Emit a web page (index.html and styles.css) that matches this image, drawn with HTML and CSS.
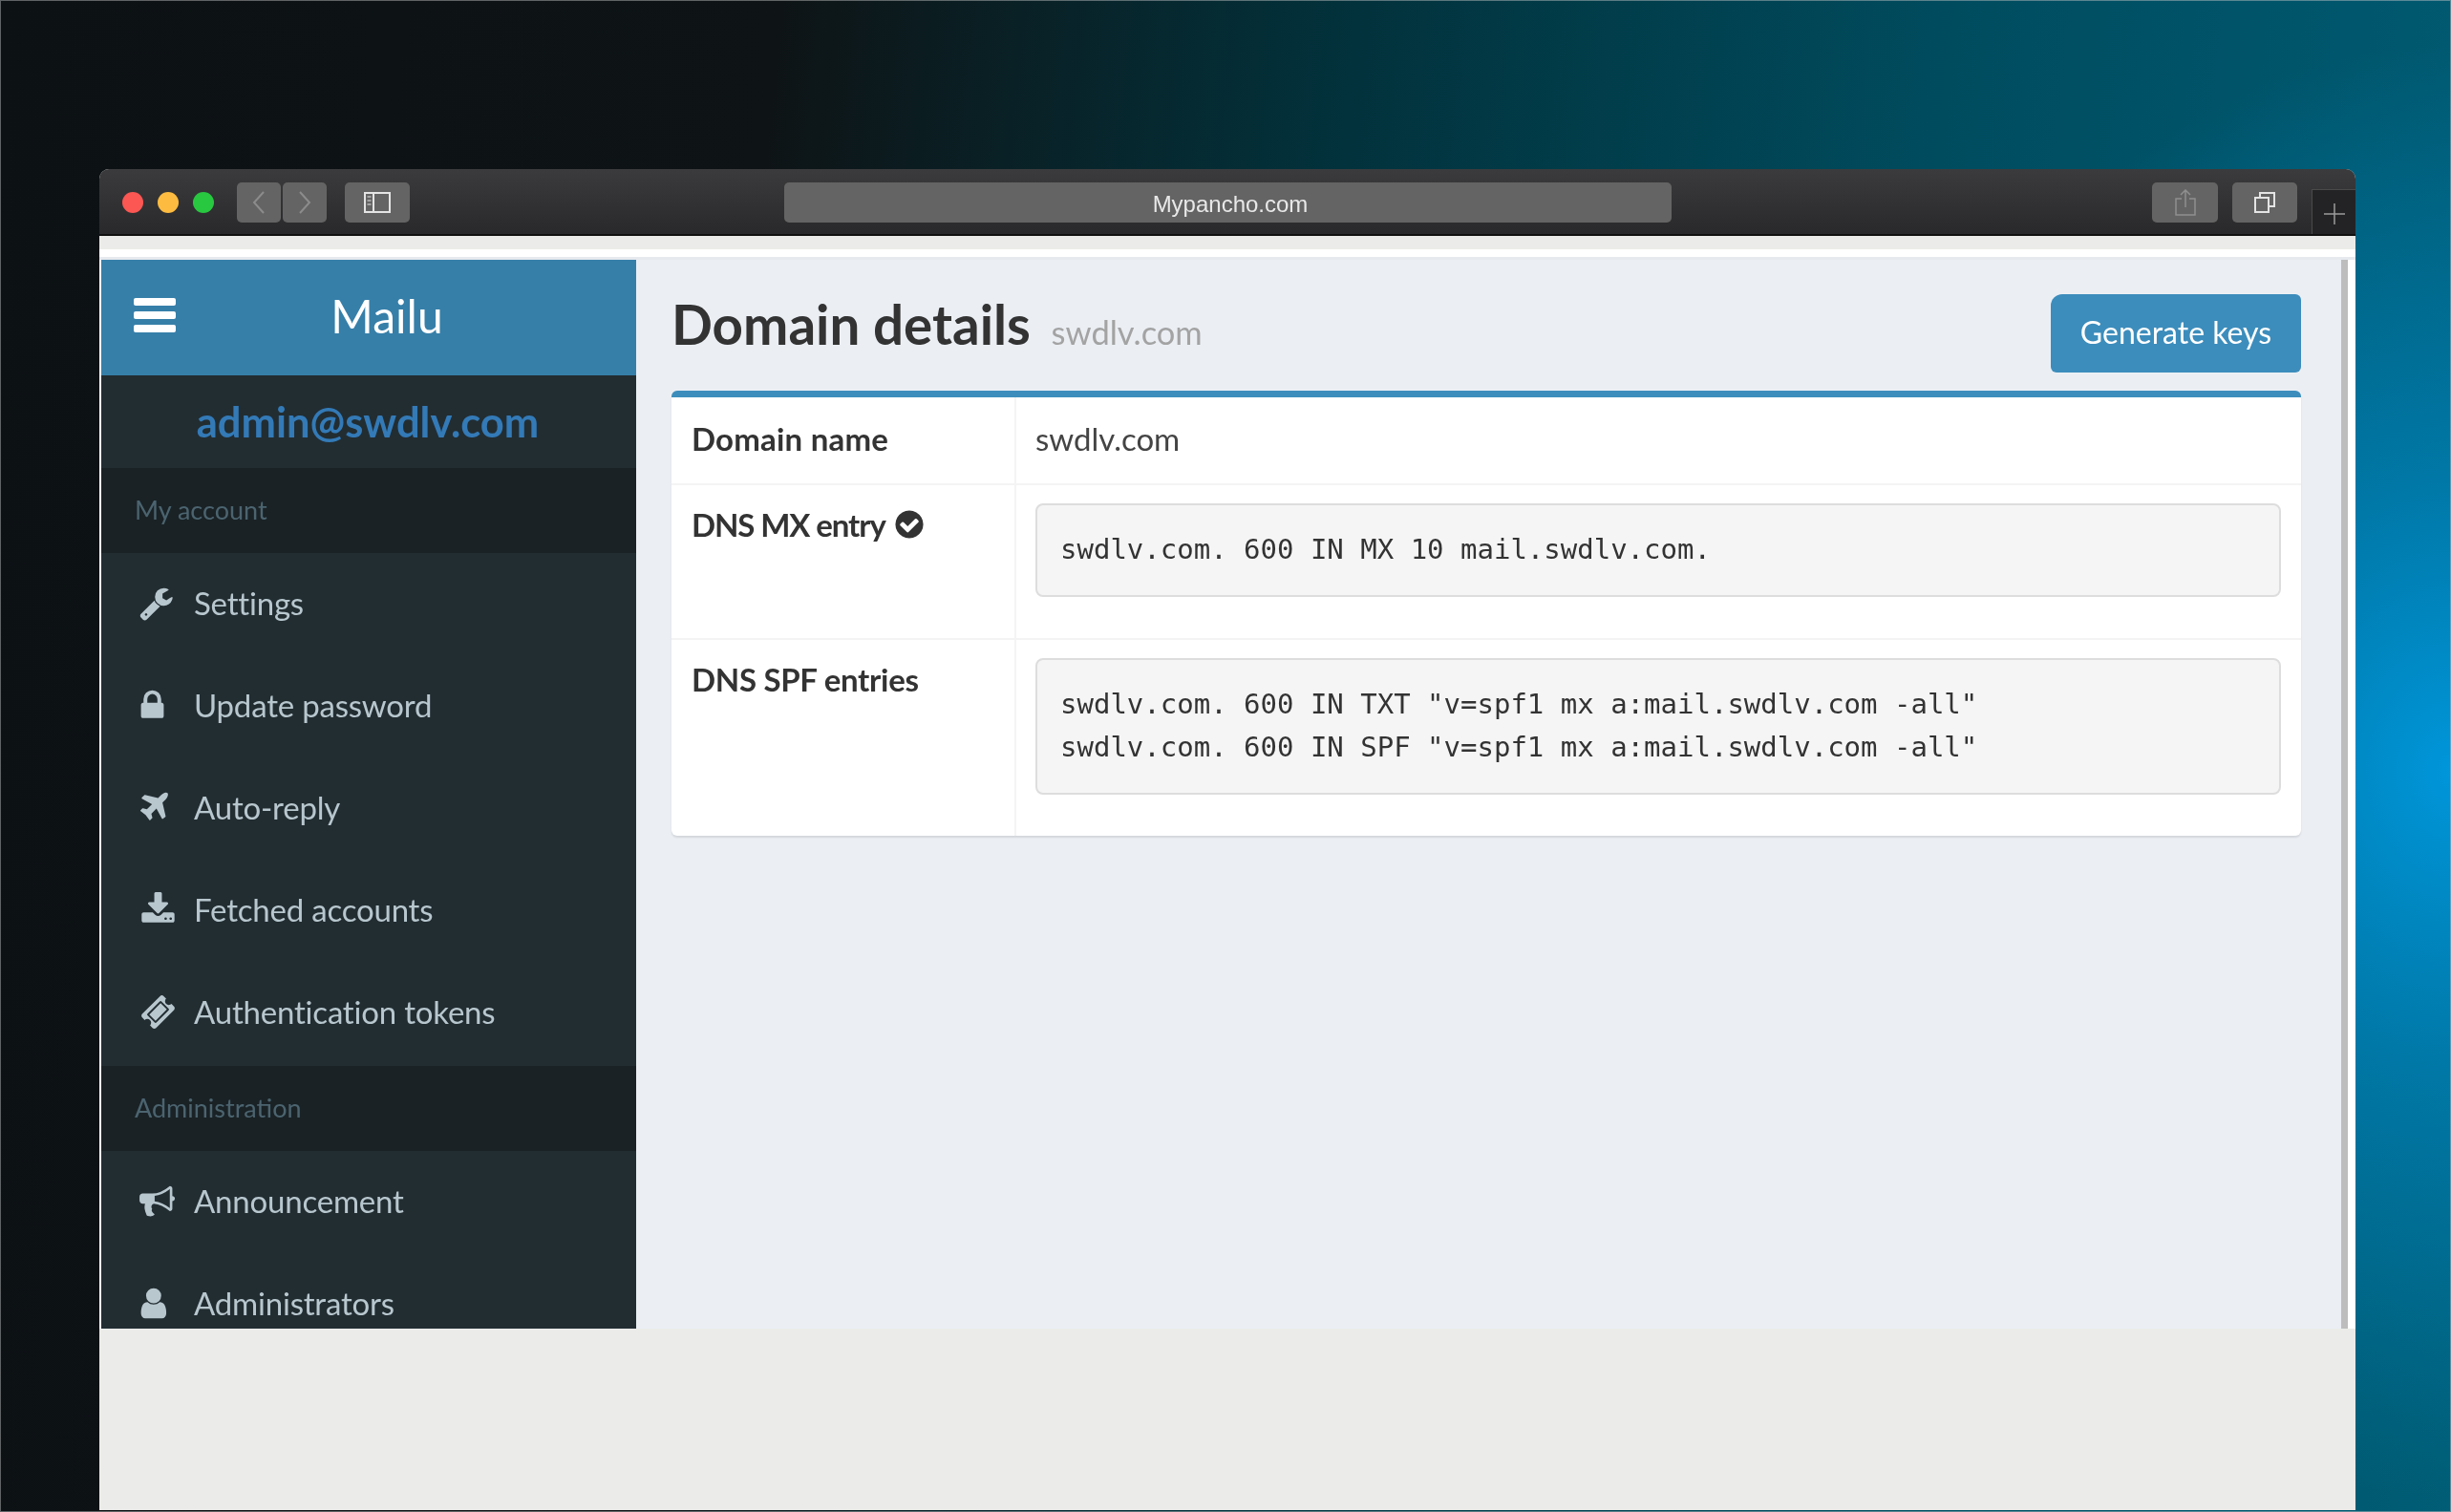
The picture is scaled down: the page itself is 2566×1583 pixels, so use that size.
FILE: index.html
```html
<!DOCTYPE html>
<html lang="en">
<head>
    <meta charset="UTF-8">
    <meta name="viewport" content="width=device-width, initial-scale=1.0">
    <title>Mailu - Domain details</title>
    <link rel="stylesheet" href="styles.css">
</head>
<body>
    <svg class="sprite" xmlns="http://www.w3.org/2000/svg">
        <symbol id="i-wrench" viewBox="-50 0 1792 1792"><path d="M448 1472q0-26-19-45t-45-19-45 19-19 45 19 45 45 19 45-19 19-45zm644-420l-682 682q-37 37-90 37-52 0-91-37l-106-108q-38-36-38-90 0-53 38-91l681-681q39 98 114.5 173.5t173.5 114.5zm634-435q0 39-23 106-47 134-164.5 217.5t-258.5 83.5q-185 0-316.5-131.5t-131.5-316.5 131.5-316.5 316.5-131.5q58 0 121.5 16.5t107.5 46.5q16 11 16 28t-16 28l-293 169v224l193 107q5-3 79-48.5t135.5-81 70.5-35.5q15 0 23.5 10t8.5 25z"/></symbol>
        <symbol id="i-lock" viewBox="145 0 1792 1792"><path d="M640 768h512v-192q0-106-75-181t-181-75-181 75-75 181v192zm832 96v576q0 40-28 68t-68 28h-960q-40 0-68-28t-28-68v-576q0-40 28-68t68-28h32v-192q0-184 132-316t316-132 316 132 132 316v192h32q40 0 68 28t28 68z"/></symbol>
        <symbol id="i-plane" viewBox="-145 0 1792 1792"><path d="M1376 160q44 52 12 148t-108 172l-161 161 160 696q5 19-12 33l-128 96q-7 6-19 6-4 0-7-1-15-3-21-16l-279-508-259 259 53 194q5 17-8 31l-96 96q-9 9-23 9h-2q-15-2-24-13l-189-252-252-189q-11-7-13-23-1-13 9-25l96-97q9-9 23-9 6 0 8 1l194 53 259-259-508-279q-14-8-17-24-2-16 9-27l128-128q14-13 30-8l665 159 160-160q76-76 172-108t148 12z"/></symbol>
        <symbol id="i-download" viewBox="-145 0 1792 1792"><path d="M1344 1344q0-26-19-45t-45-19-45 19-19 45 19 45 45 19 45-19 19-45zm256 0q0-26-19-45t-45-19-45 19-19 45 19 45 45 19 45-19 19-45zm128-224v320q0 40-28 68t-68 28h-1472q-40 0-68-28t-28-68v-320q0-40 28-68t68-28h465l135 136q58 56 136 56t136-56l136-136h464q40 0 68 28t28 68zm-325-569q17 41-14 70l-448 448q-18 19-45 19t-45-19l-448-448q-31-29-14-70 17-39 59-39h256v-448q0-26 19-45t45-19h256q26 0 45 19t19 45v448h256q42 0 59 39z"/></symbol>
        <symbol id="i-ticket" viewBox="-145 0 1792 1792"><path d="M1024 452l316 316-572 572-316-316zm-211 979l618-618q19-19 19-45t-19-45l-362-362q-18-18-45-18t-45 18l-618 618q-19 19-19 45t19 45l362 362q18 18 45 18t45-18zm889-637l-907 908q-37 37-90.5 37t-90.5-37l-126-126q56-56 56-136t-56-136-136-56-136 56l-125-126q-37-37-37-90.5t37-90.5l907-906q37-37 90.5-37t90.5 37l125 125q-56 56-56 136t56 136 136 56 136-56l126 125q37 37 37 90.5t-37 90.5z"/></symbol>
        <symbol id="i-bullhorn" viewBox="-100 0 1792 1792"><path d="M1664 640q53 0 90.5 37.5t37.5 90.5-37.5 90.5-90.5 37.5v384q0 52-38 90t-90 38q-417-347-812-380-58 19-91 66t-31 100.5 40 92.5q-20 33-23 65.5t6 58 33.5 55 48 50 61.5 50.5q-29 58-111.5 83t-168.5 11.5-132-55.5q-7-23-29.5-87.5t-32-94.5-23-89-15-101 3.5-98.5 22-110.5h-122q-66 0-113-47t-47-113v-192q0-66 47-113t113-47h480q435 0 896-384 52 0 90 38t38 90v384zm-128 604v-954q-394 302-768 343v270q377 42 768 341z"/></symbol>
        <symbol id="i-user" viewBox="80 0 1792 1792"><path d="M1536 1399q0 109-62.5 187t-150.5 78h-854q-88 0-150.5-78t-62.5-187q0-85 8.5-160.5t31.5-152 58.5-131 94-89 134.5-34.5q131 128 313 128t313-128q76 0 134.5 34.5t94 89 58.5 131 31.5 152 8.5 160.5zm-256-887q0 159-112.5 271.5t-271.5 112.5-271.5-112.5-112.5-271.5 112.5-271.5 271.5-112.5 271.5 112.5 112.5 271.5z"/></symbol>
        <symbol id="i-check" viewBox="0 0 1792 1792"><path d="M1412 734q0-28-18-46l-91-90q-19-19-45-19t-45 19l-408 407-226-226q-19-19-45-19t-45 19l-91 90q-18 18-18 46 0 27 18 45l362 362q19 19 45 19 27 0 46-19l543-543q18-18 18-45zm252 162q0 209-103 385.5t-279.5 279.5-385.5 103-385.5-103-279.5-279.5-103-385.5 103-385.5 279.5-279.5 385.5-103 385.5 103 279.5 279.5 103 385.5z"/></symbol>
    </svg>

    <div class="window">
        <div class="toolbar">
            <span class="light red"></span>
            <span class="light yellow"></span>
            <span class="light green"></span>
            <div class="nav-buttons">
                <span class="tool-btn nav-btn">
                    <svg width="14" height="24" viewBox="0 0 14 24"><path d="M12 1L2 12l10 11" fill="none" stroke="#8c8c8c" stroke-width="2"/></svg>
                </span>
                <span class="tool-btn nav-btn">
                    <svg width="14" height="24" viewBox="0 0 14 24"><path d="M2 1l10 11L2 23" fill="none" stroke="#8c8c8c" stroke-width="2"/></svg>
                </span>
            </div>
            <span class="tool-btn sidebar-btn">
                <svg width="28" height="22" viewBox="0 0 28 22"><path d="M1 1h26v20H1zM10 1v20" fill="none" stroke="#e4e4e4" stroke-width="2"/><path d="M3.500 5h4M3.500 9h4M3.500 13h4" stroke="#bbb" stroke-width="1.500"/></svg>
            </span>
            <div class="url-bar">Mypancho.com</div>
            <span class="tool-btn share-btn">
                <svg width="22" height="28" viewBox="0 0 22 28"><path d="M7 10H1v17h20V10h-6M11 19V2M6 6l5-5 5 5" fill="none" stroke="#8f8f8f" stroke-width="1.500"/></svg>
            </span>
            <span class="tool-btn copy-btn">
                <svg width="22" height="22" viewBox="0 0 22 22"><path d="M1 6h14v15H1z" fill="none" stroke="#e4e4e4" stroke-width="2"/><path d="M6 6V1h15v14h-6" fill="none" stroke="#e4e4e4" stroke-width="2"/></svg>
            </span>
            <span class="new-tab">
                <svg width="22" height="22" viewBox="0 0 22 22"><path d="M11 0v22M0 11h22" stroke="#9c9c9c" stroke-width="1.500"/></svg>
            </span>
        </div>

        <div class="page">
            <div class="page-strip"></div>
            <div class="app">
                <aside class="sidebar">
                    <div class="logo-bar">
                        <span class="burger"><i></i><i></i><i></i></span>
                        <span class="logo">Mailu</span>
                    </div>
                    <div class="user-panel">admin@swdlv.com</div>
                    <div class="menu-head">My account</div>
                    <a class="menu-item"><svg class="menu-icon"><use href="#i-wrench"/></svg>Settings</a>
                    <a class="menu-item"><svg class="menu-icon"><use href="#i-lock"/></svg>Update password</a>
                    <a class="menu-item"><svg class="menu-icon"><use href="#i-plane"/></svg>Auto-reply</a>
                    <a class="menu-item"><svg class="menu-icon"><use href="#i-download"/></svg>Fetched accounts</a>
                    <a class="menu-item"><svg class="menu-icon"><use href="#i-ticket"/></svg>Authentication tokens</a>
                    <div class="menu-head">Administration</div>
                    <a class="menu-item"><svg class="menu-icon"><use href="#i-bullhorn"/></svg>Announcement</a>
                    <a class="menu-item"><svg class="menu-icon"><use href="#i-user"/></svg>Administrators</a>
                </aside>

                <main class="content">
                    <div class="content-head">
                        <h1>Domain details <small>swdlv.com</small></h1>
                        <button class="btn" type="button">Generate keys</button>
                    </div>
                    <div class="box">
                        <table class="details">
                            <tr>
                                <th class="label-wide">Domain name</th>
                                <td>swdlv.com</td>
                            </tr>
                            <tr>
                                <th><span class="label-tight">DNS MX entry</span> <svg class="check"><use href="#i-check"/></svg></th>
                                <td><pre>swdlv.com. 600 IN MX 10 mail.swdlv.com.</pre></td>
                            </tr>
                            <tr>
                                <th>DNS SPF entries</th>
                                <td><pre>swdlv.com. 600 IN TXT "v=spf1 mx a:mail.swdlv.com -all"
swdlv.com. 600 IN SPF "v=spf1 mx a:mail.swdlv.com -all"</pre></td>
                            </tr>
                        </table>
                    </div>
                </main>
                <div class="scrollbar"></div>
            </div>
        </div>
    </div>
</body>
</html>
```

FILE: styles.css
```css
* {
    box-sizing: border-box;
}

html, body {
    margin: 0;
    height: 1583px;
    overflow: hidden;
}

body {
    padding: 177px 100px 0 104px;
    font-family: "Lato", "Liberation Sans", sans-serif;
    background:
        radial-gradient(ellipse 620px 760px at 100% 51%, #0096da 0%, rgba(0,130,185,0.75) 40%, rgba(0,100,130,0) 100%),
        linear-gradient(96deg, #0c1114 0%, #0e1416 30%, #02323c 52%, #004c5f 75%, #005d75 100%);
    box-shadow: inset 0 0 0 1px rgba(200,200,200,0.45);
}

.sprite {
    display: none;
}

symbol {
    overflow: visible;
}

.window {
    height: 1404px;
    display: flex;
    flex-direction: column;
    background: #ebebe9;
    border-radius: 10px 10px 0 0;
    overflow: hidden;
}

/* browser chrome */
.toolbar {
    height: 70px;
    flex: none;
    display: flex;
    align-items: center;
    padding: 1px 0 0 24px;
    background: linear-gradient(#3b3b3d, #29292b);
    border-bottom: 2px solid #111;
    filter: blur(0.5px);
}

.light {
    width: 22px;
    height: 22px;
    border-radius: 50%;
    margin-right: 15px;
}

.red { background: #fc5753; }
.yellow { background: #fdbc40; }
.green { background: #28c840; }

.tool-btn {
    display: flex;
    align-items: center;
    justify-content: center;
    height: 42px;
    background: #646464;
    border-radius: 5px;
}

.nav-buttons {
    display: flex;
    gap: 2px;
    margin-left: 8.500px;
}

.nav-btn {
    width: 46px;
}

.sidebar-btn {
    width: 68px;
    margin-left: 19px;
}

.url-bar {
    width: 929px;
    height: 42px;
    margin-left: 392px;
    padding-left: 6px;
    background: #646464;
    border-radius: 5px;
    color: #e8e8e8;
    font-family: "Liberation Sans", sans-serif;
    font-size: 24px;
    line-height: 45px;
    text-align: center;
}

.share-btn {
    width: 69px;
    margin-left: auto;
}

.copy-btn {
    width: 68px;
    margin-left: 15px;
}

.new-tab {
    align-self: flex-end;
    display: flex;
    align-items: center;
    justify-content: center;
    width: 46px;
    height: 47px;
    padding-top: 3px;
    margin-left: 15px;
    background: #232325;
    border-left: 1px solid #4a4a4a;
    border-top: 1px solid #4a4a4a;
}

/* page */
.page {
    flex: none;
    background: #fff;
}

.page-strip {
    height: 14px;
    background: #ebebe9;
}

.app {
    display: flex;
    height: 1122px;
    margin-top: 8px;
    padding-left: 2px;
    border-top: 3px solid #e6e9ee;
    overflow: hidden;
}

.sidebar {
    width: 560px;
    flex: none;
    background: #222d32;
    color: #b8c7ce;
    filter: blur(0.6px);
}

.logo-bar {
    position: relative;
    height: 121px;
    background: #367fa9;
    color: #fff;
    text-align: center;
    font-size: 48px;
    line-height: 118px;
}

.logo {
    margin-left: 38px;
}

.burger {
    position: absolute;
    left: 34px;
    top: 40px;
    width: 44px;
}

.burger i {
    display: block;
    height: 8px;
    margin-bottom: 6px;
    background: #fff;
    border-radius: 2px;
}

.user-panel {
    height: 97px;
    padding-right: 2px;
    color: #337ab7;
    font-size: 43.500px;
    font-weight: 700;
    line-height: 96px;
    text-align: center;
}

.menu-head {
    height: 89px;
    padding-left: 35px;
    background: #1a2226;
    color: #4b646f;
    font-size: 27px;
    line-height: 88px;
}

.menu-item + .menu-head {
    margin-top: 2px;
}

.menu-item {
    display: flex;
    align-items: center;
    height: 107px;
    padding: 0 0 3px 38px;
    font-size: 33px;
    letter-spacing: -0.2px;
}

.menu-icon {
    width: 37px;
    height: 37px;
    margin-right: 22px;
    fill: #b8c7ce;
    flex: none;
    overflow: visible;
}

.content {
    flex: 1;
    padding: 36px 42px 0 37px;
    background: #ebeff4;
    color: #333;
    filter: blur(0.6px);
}

.content-head {
    display: flex;
    justify-content: space-between;
    align-items: flex-start;
    margin-bottom: 19px;
}

h1 {
    margin: -5px 0 0;
    font-size: 56.500px;
    font-weight: 700;
    line-height: 72px;
}

h1 small {
    margin-left: 8px;
    color: #a3a3a3;
    font-size: 34.500px;
    font-weight: 400;
}

.btn {
    width: 262px;
    height: 82px;
    padding-bottom: 4px;
    border: 0;
    border-radius: 12px 6px 6px 6px;
    background: #3c8dbc;
    color: #fff;
    font-family: inherit;
    font-size: 32px;
}

.box {
    background: #fff;
    border-top: 7px solid #3c8dbc;
    border-radius: 6px;
    box-shadow: 0 2px 2px rgba(0,0,0,0.1);
}

.details {
    width: 100%;
    border-collapse: collapse;
    font-size: 33px;
}

.details th, .details td {
    padding: 19px 21px 20px 20px;
    vertical-align: top;
    text-align: left;
    line-height: 48px;
    border-top: 2px solid #f4f4f4;
}

.details th {
    width: 360px;
    padding-top: 17px;
    padding-left: 21px;
    font-weight: 700;
    letter-spacing: -0.3px;
    border-right: 2px solid #f4f4f4;
}

.details td {
    color: #444;
}

.details tr:first-child th, .details tr:first-child td {
    padding-top: 19px;
    padding-bottom: 23px;
    border-top: 0;
}

.details .label-wide {
    letter-spacing: 0.2px;
}

.label-tight {
    letter-spacing: -1.100px;
}

.check {
    width: 34px;
    height: 34px;
    vertical-align: -4px;
    fill: #333;
}

pre {
    margin: 0 0 23px;
    padding: 24px 24px 25px;
    background: #f5f5f5;
    border: 2px solid #ddd;
    border-radius: 8px;
    font-family: "DejaVu Sans Mono", monospace;
    font-size: 29px;
    line-height: 45px;
    color: #333;
}

.scrollbar {
    width: 15px;
    flex: none;
    background: linear-gradient(90deg, #bdbdbd 0 7px, #fff 7px);
}
```
